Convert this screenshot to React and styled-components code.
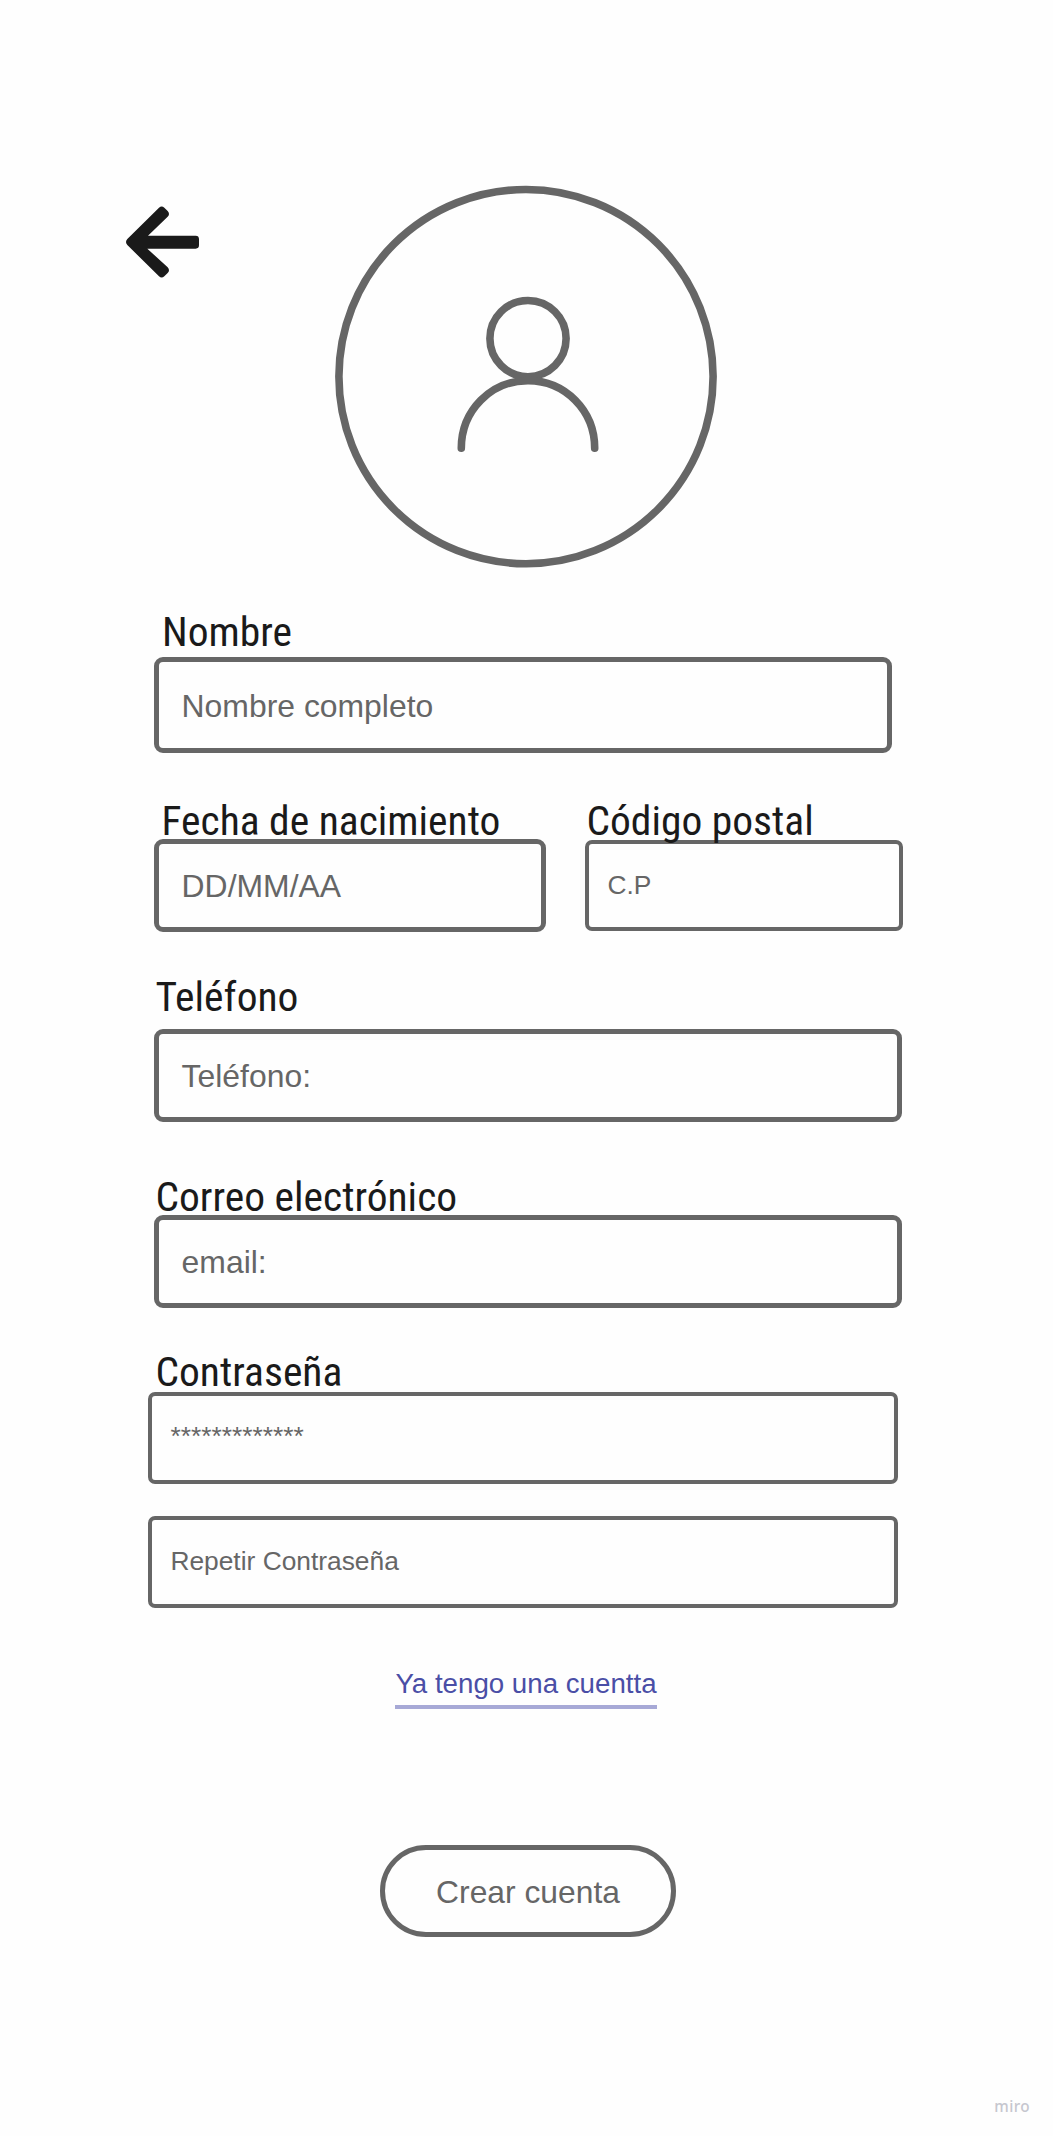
import React from "react";
import styled, { createGlobalStyle } from "styled-components";

const GlobalStyle = createGlobalStyle`
  * { box-sizing: border-box; }
  body { margin: 0; background: #fefefe; }
`;

const Screen = styled.main`
  display: flex;
  flex-direction: column;
  width: 1053px;
  height: 2136px;
  padding: 185px 0 0;
  overflow: hidden;
  background: #fefefe;
  color: #666;
  font-family: "Liberation Sans", Arial, sans-serif;
`;

const Header = styled.header`
  display: flex;
  align-items: flex-start;
  height: 428px;
  padding-left: 126px;
`;

const BackButton = styled.button`
  display: block;
  margin: 21px 134.7px 0 0;
  padding: 0;
  border: 0;
  background: none;
  svg { display: block; }
`;

const Avatar = styled.svg`
  display: block;
  fill: none;
  stroke: #666;
  stroke-width: 7.6;
  stroke-linecap: round;
`;

const Form = styled.form`
  display: flex;
  flex-direction: column;
  padding-left: 154px;
`;

const Row = styled.div`
  display: flex;
  gap: 39px;
  margin-top: 49px;
`;

const Field = styled.div`
  display: flex;
  flex-direction: column;
  width: ${(p) => p.$width}px;
  margin-top: ${(p) => p.$top || 0}px;
  margin-left: ${(p) => p.$left || 0}px;
`;

const Label = styled.label`
  z-index: 1;
  position: relative;
  height: 37px;
  margin: 0 0 ${(p) => p.$gap || 0}px ${(p) => p.$indent || 0}px;
  color: #1a1a1a;
  font-family: "Roboto Condensed", Roboto, sans-serif;
  font-stretch: 75%;
  font-size: 41.5px;
  line-height: 38px;
  white-space: nowrap;
`;

const Box = styled.div`
  height: ${(p) => p.$height || 93}px;
  padding: ${(p) => p.$textTop}px 0 0 ${(p) => (p.$thin ? 18.4 : 22.6)}px;
  border: ${(p) => (p.$thin ? 4 : 5)}px solid #666;
  border-radius: ${(p) => (p.$thin ? 7 : 9)}px;
  font-size: ${(p) => (p.$thin ? 26.35 : 31.9)}px;
  line-height: 36px;
  white-space: nowrap;
`;

const Actions = styled.footer`
  display: flex;
  flex-direction: column;
  align-items: center;
  padding-top: 58px;
`;

const LoginLink = styled.a`
  height: 43px;
  margin-right: 1px;
  border-bottom: 4px solid #a7a9d6;
  color: #4a4ea6;
  font-size: 27.7px;
  line-height: 36px;
`;

const CreateButton = styled.button`
  width: 296px;
  height: 92px;
  margin: 136px 0 0 3px;
  padding: 2px 0 0;
  border: 5px solid #666;
  border-radius: 46px;
  background: none;
  color: #666;
  font: 31.8px "Liberation Sans", Arial, sans-serif;
`;

const Watermark = styled.small`
  align-self: flex-end;
  margin: 157px 23px 0 0;
  color: #c6c7cf;
  font: 500 15.3px/24px "Noto Sans", sans-serif;
  letter-spacing: 0.4px;
`;

export default function App() {
  return (
    <Screen>
      <GlobalStyle />
      <Header>
        <BackButton aria-label="Volver">
          <svg width="73.33" height="72" viewBox="78 108 220 216" fill="#1a1a1a">
            <path d="M82 207L177 113Q185 106 193 113L203 123Q211 132 203 140L144 197H287Q297 197 297 207V226Q297 236 287 236H142L203 292Q211 301 203 309L193 319Q185 326 177 319L82 225Q74 216 82 207Z" />
          </svg>
        </BackButton>
        <Avatar width="384" height="384" viewBox="334 185 384 384">
          <circle cx="526" cy="376.6" r="187.1" />
          <circle cx="528" cy="338.6" r="38.1" />
          <path d="M461.3 448.3C461.3 410.4 491 380.6 528 380.6S594.7 410.4 594.7 448.3" />
        </Avatar>
      </Header>
      <Form>
        <Field $width={738}>
          <Label $indent={8} $gap={7}>Nombre</Label>
          <Box $height={96} $textTop={26}>Nombre completo</Box>
        </Field>
        <Row>
          <Field $width={392}>
            <Label $indent={7.5}>Fecha de nacimiento</Label>
            <Box $textTop={24}>DD/MM/AA</Box>
          </Field>
          <Field $width={318}>
            <Label $indent={1.5} $gap={1}>Código postal</Label>
            <Box $thin $height={91} $textTop={23}>C.P</Box>
          </Field>
        </Row>
        <Field $width={748} $top={46}>
          <Label $indent={1.5} $gap={14}>Teléfono</Label>
          <Box $textTop={24}>Teléfono:</Box>
        </Field>
        <Field $width={748} $top={56}>
          <Label $indent={1.5}>Correo electrónico</Label>
          <Box $textTop={24}>email:</Box>
        </Field>
        <Field $width={750} $top={45} $left={-6}>
          <Label $indent={7.5} $gap={2}>Contraseña</Label>
          <Box $thin $height={92} $textTop={22}>*************</Box>
        </Field>
        <Field $width={750} $top={32} $left={-6}>
          <Box $thin $height={92} $textTop={23}>Repetir Contraseña</Box>
        </Field>
      </Form>
      <Actions>
        <LoginLink>Ya tengo una cuentta</LoginLink>
        <CreateButton>Crear cuenta</CreateButton>
      </Actions>
      <Watermark>miro</Watermark>
    </Screen>
  );
}
